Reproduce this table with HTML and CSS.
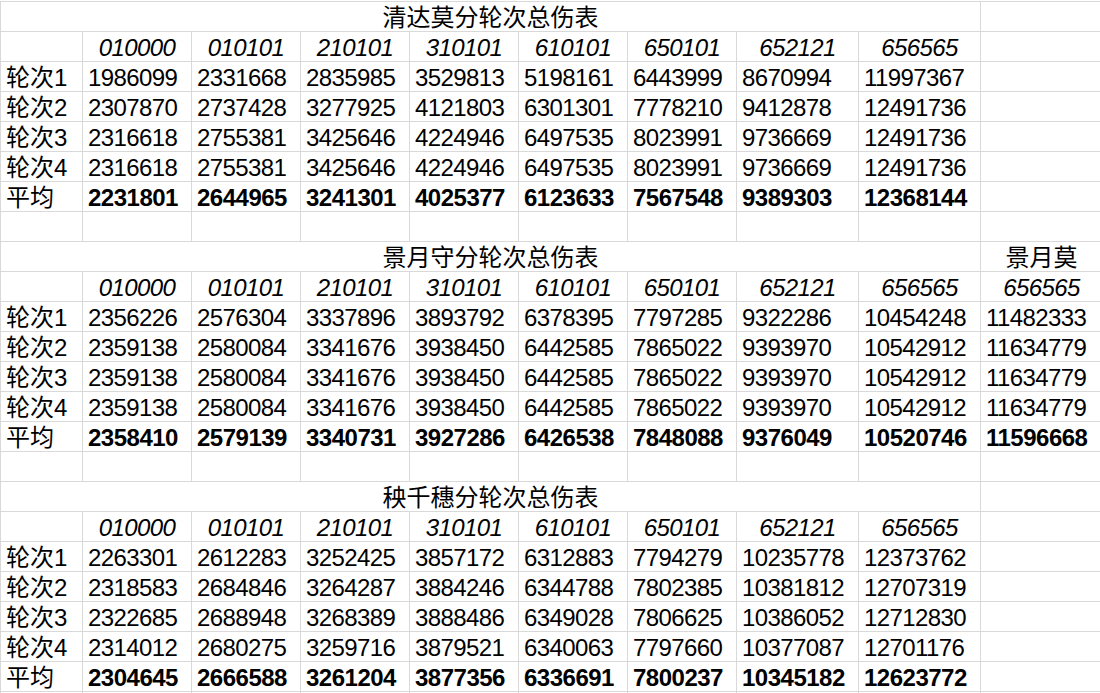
FILE: index.html
```html
<!DOCTYPE html>
<html lang="zh">
<head>
<meta charset="utf-8">
<title>分轮次总伤表</title>
<link rel="stylesheet" href="styles.css">
</head>
<body>
<div class="sheet">
  <!-- Table 1 -->
  <div class="c t">清达莫分轮次总伤表</div><div class="c"></div>
  <div class="c"></div><div class="c h">010000</div><div class="c h">010101</div><div class="c h">210101</div><div class="c h">310101</div><div class="c h">610101</div><div class="c h">650101</div><div class="c h">652121</div><div class="c h">656565</div><div class="c"></div>
  <div class="c">轮次1</div><div class="c n">1986099</div><div class="c n">2331668</div><div class="c n">2835985</div><div class="c n">3529813</div><div class="c n">5198161</div><div class="c n">6443999</div><div class="c n">8670994</div><div class="c n">11997367</div><div class="c"></div>
  <div class="c">轮次2</div><div class="c n">2307870</div><div class="c n">2737428</div><div class="c n">3277925</div><div class="c n">4121803</div><div class="c n">6301301</div><div class="c n">7778210</div><div class="c n">9412878</div><div class="c n">12491736</div><div class="c"></div>
  <div class="c">轮次3</div><div class="c n">2316618</div><div class="c n">2755381</div><div class="c n">3425646</div><div class="c n">4224946</div><div class="c n">6497535</div><div class="c n">8023991</div><div class="c n">9736669</div><div class="c n">12491736</div><div class="c"></div>
  <div class="c">轮次4</div><div class="c n">2316618</div><div class="c n">2755381</div><div class="c n">3425646</div><div class="c n">4224946</div><div class="c n">6497535</div><div class="c n">8023991</div><div class="c n">9736669</div><div class="c n">12491736</div><div class="c"></div>
  <div class="c">平均</div><div class="c n b">2231801</div><div class="c n b">2644965</div><div class="c n b">3241301</div><div class="c n b">4025377</div><div class="c n b">6123633</div><div class="c n b">7567548</div><div class="c n b">9389303</div><div class="c n b">12368144</div><div class="c"></div>
  <div class="c"></div><div class="c"></div><div class="c"></div><div class="c"></div><div class="c"></div><div class="c"></div><div class="c"></div><div class="c"></div><div class="c"></div><div class="c"></div>

  <!-- Table 2 -->
  <div class="c t">景月守分轮次总伤表</div><div class="c ctr">景月莫</div>
  <div class="c"></div><div class="c h">010000</div><div class="c h">010101</div><div class="c h">210101</div><div class="c h">310101</div><div class="c h">610101</div><div class="c h">650101</div><div class="c h">652121</div><div class="c h">656565</div><div class="c h">656565</div>
  <div class="c">轮次1</div><div class="c n">2356226</div><div class="c n">2576304</div><div class="c n">3337896</div><div class="c n">3893792</div><div class="c n">6378395</div><div class="c n">7797285</div><div class="c n">9322286</div><div class="c n">10454248</div><div class="c n">11482333</div>
  <div class="c">轮次2</div><div class="c n">2359138</div><div class="c n">2580084</div><div class="c n">3341676</div><div class="c n">3938450</div><div class="c n">6442585</div><div class="c n">7865022</div><div class="c n">9393970</div><div class="c n">10542912</div><div class="c n">11634779</div>
  <div class="c">轮次3</div><div class="c n">2359138</div><div class="c n">2580084</div><div class="c n">3341676</div><div class="c n">3938450</div><div class="c n">6442585</div><div class="c n">7865022</div><div class="c n">9393970</div><div class="c n">10542912</div><div class="c n">11634779</div>
  <div class="c">轮次4</div><div class="c n">2359138</div><div class="c n">2580084</div><div class="c n">3341676</div><div class="c n">3938450</div><div class="c n">6442585</div><div class="c n">7865022</div><div class="c n">9393970</div><div class="c n">10542912</div><div class="c n">11634779</div>
  <div class="c">平均</div><div class="c n b">2358410</div><div class="c n b">2579139</div><div class="c n b">3340731</div><div class="c n b">3927286</div><div class="c n b">6426538</div><div class="c n b">7848088</div><div class="c n b">9376049</div><div class="c n b">10520746</div><div class="c n b">11596668</div>
  <div class="c"></div><div class="c"></div><div class="c"></div><div class="c"></div><div class="c"></div><div class="c"></div><div class="c"></div><div class="c"></div><div class="c"></div><div class="c"></div>

  <!-- Table 3 -->
  <div class="c t">秧千穗分轮次总伤表</div><div class="c"></div>
  <div class="c"></div><div class="c h">010000</div><div class="c h">010101</div><div class="c h">210101</div><div class="c h">310101</div><div class="c h">610101</div><div class="c h">650101</div><div class="c h">652121</div><div class="c h">656565</div><div class="c"></div>
  <div class="c">轮次1</div><div class="c n">2263301</div><div class="c n">2612283</div><div class="c n">3252425</div><div class="c n">3857172</div><div class="c n">6312883</div><div class="c n">7794279</div><div class="c n">10235778</div><div class="c n">12373762</div><div class="c"></div>
  <div class="c">轮次2</div><div class="c n">2318583</div><div class="c n">2684846</div><div class="c n">3264287</div><div class="c n">3884246</div><div class="c n">6344788</div><div class="c n">7802385</div><div class="c n">10381812</div><div class="c n">12707319</div><div class="c"></div>
  <div class="c">轮次3</div><div class="c n">2322685</div><div class="c n">2688948</div><div class="c n">3268389</div><div class="c n">3888486</div><div class="c n">6349028</div><div class="c n">7806625</div><div class="c n">10386052</div><div class="c n">12712830</div><div class="c"></div>
  <div class="c">轮次4</div><div class="c n">2314012</div><div class="c n">2680275</div><div class="c n">3259716</div><div class="c n">3879521</div><div class="c n">6340063</div><div class="c n">7797660</div><div class="c n">10377087</div><div class="c n">12701176</div><div class="c"></div>
  <div class="c">平均</div><div class="c n b">2304645</div><div class="c n b">2666588</div><div class="c n b">3261204</div><div class="c n b">3877356</div><div class="c n b">6336691</div><div class="c n b">7800237</div><div class="c n b">10345182</div><div class="c n b">12623772</div><div class="c"></div>
  <div class="c"></div><div class="c"></div><div class="c"></div><div class="c"></div><div class="c"></div><div class="c"></div><div class="c"></div><div class="c"></div><div class="c"></div><div class="c"></div>
</div>
</body>
</html>
```

FILE: styles.css
```css
html, body {
  margin: 0;
  padding: 0;
  overflow: hidden;
  background: #ffffff;
}

.sheet {
  display: grid;
  grid-template-columns: 82px repeat(6, 109px) repeat(3, 122px);
  grid-auto-rows: 30px;
  width: max-content;
  margin-top: 1px;
  border-left: 1px solid #d9d9d9;
  border-top: 1px solid #d9d9d9;
  font-family: "Liberation Sans", "Noto Sans CJK SC", sans-serif;
  font-size: 24px;
  color: #000000;
}

.c {
  box-sizing: border-box;
  border-right: 1px solid #d9d9d9;
  border-bottom: 1px solid #d9d9d9;
  padding: 3px 0 0 5px;
  line-height: 26px;
  white-space: nowrap;
  overflow: hidden;
}

.n {
  letter-spacing: -0.6px;
}

.b {
  font-weight: bold;
  letter-spacing: -0.5px;
}

.h {
  font-style: italic;
  text-align: center;
  letter-spacing: -0.6px;
  padding-left: 0;
}

.t {
  grid-column: span 9;
  text-align: center;
  padding-left: 0;
}

.ctr {
  text-align: center;
  padding-left: 0;
}
```
